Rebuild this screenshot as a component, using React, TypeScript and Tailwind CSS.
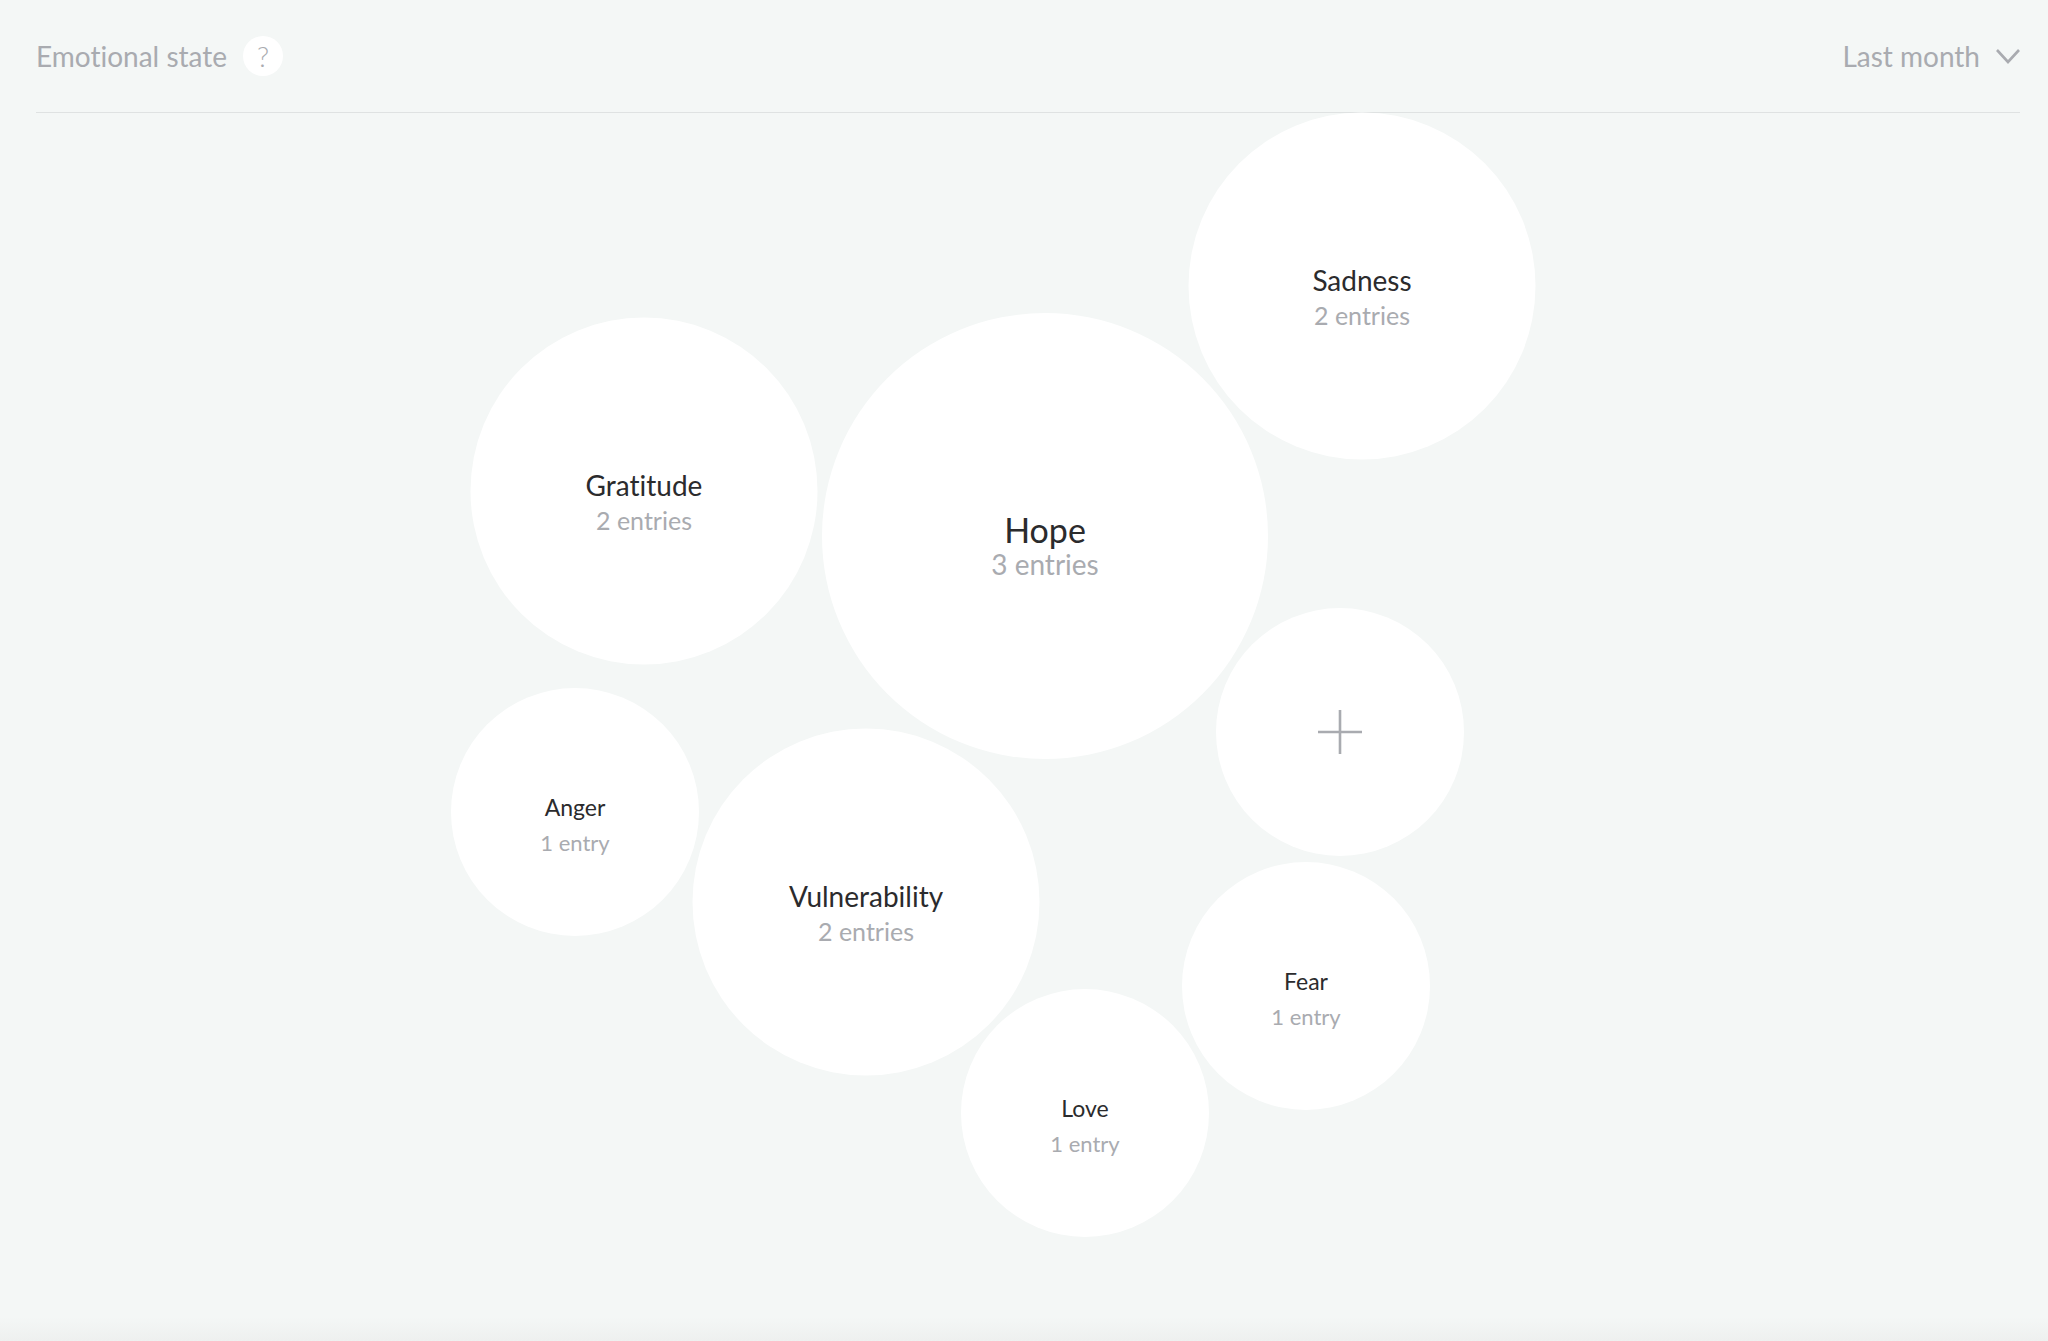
const sizes = {
  large: { circle: "size-[446px] pt-[22px]", name: "text-[34px]", count: "text-[28px]" },
  medium: { circle: "size-[347px] pt-[22px]", name: "text-[28px]", count: "text-[25px]" },
  small: { circle: "size-[248px] pt-[26px]", name: "text-[23px]", count: "text-[22px]" },
};

type Bubble = { name: string; count: string; size: keyof typeof sizes; x: number; y: number };

// x is the distance from the middle of the canvas, y from its top; both to the bubble's centre
const bubbles: Bubble[] = [
  { name: "Sadness", count: "2 entries", size: "medium", x: 342, y: 173 },
  { name: "Gratitude", count: "2 entries", size: "medium", x: -376, y: 378 },
  { name: "Hope", count: "3 entries", size: "large", x: 25, y: 423 },
  { name: "Anger", count: "1 entry", size: "small", x: -445, y: 699 },
  { name: "Vulnerability", count: "2 entries", size: "medium", x: -154, y: 789 },
  { name: "Fear", count: "1 entry", size: "small", x: 286, y: 873 },
  { name: "Love", count: "1 entry", size: "small", x: 65, y: 1000 },
];

const at = (x: number, y: number) => ({ left: `calc(50% + ${x - 8}px)`, top: y });

export default function App() {
  return (
    <div className="flex min-h-screen flex-col bg-[#f4f7f6] font-['Lato',sans-serif] text-[#a9abb0] [font-variant-ligatures:none]">
      <header className="mr-7 ml-9 flex h-[113px] items-center justify-between border-b border-[#dfe2e2] text-[28px] leading-9">
        <div className="flex items-center gap-4">
          <h1>Emotional state</h1>
          <button
            type="button"
            aria-label="About emotional state"
            className="flex size-10 items-center justify-center rounded-full bg-white font-light"
          >
            ?
          </button>
        </div>
        <div className="relative flex items-center">
          <select
            aria-label="Period"
            defaultValue="month"
            className="field-sizing-content appearance-none bg-transparent pr-10"
          >
            <option value="week">Last week</option>
            <option value="month">Last month</option>
            <option value="year">Last year</option>
          </select>
          <svg
            className="pointer-events-none absolute right-0 h-4 w-6"
            viewBox="0 0 24 16"
            fill="none"
            stroke="currentColor"
            strokeWidth="2.6"
            aria-hidden="true"
          >
            <path d="M1 2 12 14 23 2" />
          </svg>
        </div>
      </header>

      <main className="relative mr-7 ml-9 min-h-[1204px] grow">
        {bubbles.map((b) => (
          <button
            key={b.name}
            type="button"
            style={at(b.x, b.y)}
            className={`absolute flex -translate-1/2 flex-col items-center justify-center rounded-full bg-white leading-[35px] ${sizes[b.size].circle}`}
          >
            <span className={`text-[#2b2b2d] ${sizes[b.size].name}`}>{b.name}</span>
            <span className={sizes[b.size].count}>{b.count}</span>
          </button>
        ))}
        <button
          type="button"
          aria-label="Add entry"
          style={at(320, 619)}
          className="absolute flex size-[248px] -translate-1/2 items-center justify-center rounded-full bg-white"
        >
          <svg className="size-[46px]" viewBox="0 0 46 46" stroke="currentColor" strokeWidth="2.6" aria-hidden="true">
            <path d="M23 1V45M1 23H45" />
          </svg>
        </button>
      </main>

      <div className="h-6 bg-linear-to-b from-[#f4f7f6] to-[#eef0ef]" />
    </div>
  );
}
